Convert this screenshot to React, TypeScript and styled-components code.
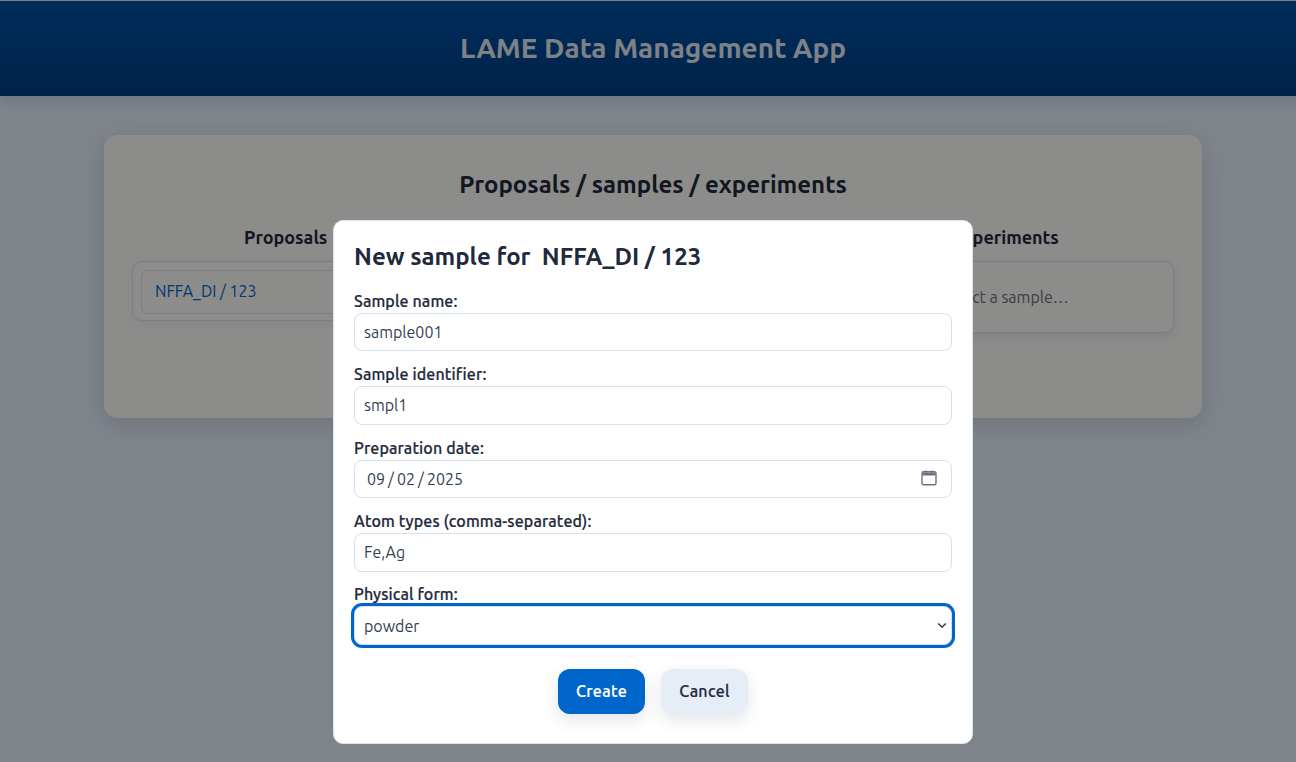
import React from "react";
import styled, { createGlobalStyle } from "styled-components";

const Global = createGlobalStyle`
  html, body { margin: 0; padding: 0; overflow: hidden; height: 100%; }
  body {
    font-family: "Ubuntu", "Noto Sans", "Open Sans", sans-serif;
    background: #e8f0fd;
    color: #1f2a3d;
  }
  * { box-sizing: border-box; }
`;

const Page = styled.div`
  width: 1306px;
  height: 762px;
  position: relative;
  padding-top: 1px;
`;

const Header = styled.header`
  height: 95px;
  display: flex;
  align-items: center;
  justify-content: center;
  background: linear-gradient(180deg, #0052a8 0%, #003f85 100%);
  box-shadow: 0 4px 16px rgba(0, 30, 70, 0.14);
`;

const AppTitle = styled.h1`
  margin: -2px 0 0;
  font-size: 28px;
  font-weight: 700;
  line-height: 34px;
  color: #ffffff;
  opacity: 0.9;
`;

const Card = styled.section`
  width: 1098px;
  height: 283px;
  margin: 39px auto 0;
  padding: 33px 28px;
  background: #fffffc;
  border-radius: 14px;
  box-shadow: 0 6px 24px rgba(0, 30, 70, 0.14);
`;

const CardTitle = styled.h2`
  margin: 0 0 23px;
  text-align: center;
  font-size: 24px;
  line-height: 34px;
  font-weight: 700;
`;

const Columns = styled.div`
  display: grid;
  grid-template-columns: repeat(3, 1fr);
  gap: 24px;
`;

const Column = styled.div`
  display: flex;
  flex-direction: column;
  min-width: 0;
`;

const ColumnTitle = styled.h3<{ $inset?: number }>`
  margin: 0 0 12px;
  padding-right: ${(p) => p.$inset ?? 0}px;
  min-height: 24px;
  text-align: center;
  font-size: 18px;
  line-height: 24px;
  font-weight: 700;
`;

const ListBox = styled.div`
  height: 60px;
  border: 1px solid #dde5ee;
  border-radius: 10px;
  padding: 8px;
  box-shadow: 0 2px 8px rgba(0, 40, 90, 0.06);
`;

const ListItem = styled.div`
  height: 44px;
  display: flex;
  align-items: center;
  padding: 0 13px 2px;
  border: 1px solid #dde5ee;
  border-radius: 6px;
  color: #0066cc;
  font-size: 16px;
`;

const Placeholder = styled.div`
  height: 72px;
  border: 1px solid #dde5ee;
  border-radius: 10px;
  display: flex;
  align-items: center;
  justify-content: center;
  padding: 0 6px 0 0;
  font-size: 16px;
  color: #6a7280;
  box-shadow: 0 4px 12px rgba(0, 40, 90, 0.1);
`;

const Overlay = styled.div`
  position: absolute;
  inset: 0;
  background: rgba(0, 0, 0, 0.45);
  display: flex;
  justify-content: center;
  align-items: flex-start;
  padding-top: 220px;
`;

const Modal = styled.form`
  width: 640px;
  height: 524px;
  background: #ffffff;
  border: 1px solid #dbe6f3;
  border-radius: 10px;
  padding: 20px;
  display: flex;
  flex-direction: column;
`;

const ModalTitle = styled.h2`
  margin: 0 0 17.85px;
  font-size: 24px;
  line-height: 32px;
  font-weight: 700;
  white-space: pre;
`;

const Field = styled.div`
  display: flex;
  flex-direction: column;
  margin-bottom: 12.9px;
`;

const Label = styled.label`
  font-size: 16px;
  font-weight: 500;
  line-height: 20px;
  letter-spacing: 0.12px;
  -webkit-text-stroke: 0.22px currentColor;
  margin-bottom: 2px;
`;

const Control = styled.div`
  position: relative;
`;

const Input = styled.input<{ $lift?: boolean }>`
  display: block;
  height: 38.5px;
  width: 100%;
  border: 1px solid #d4e1f0;
  border-radius: 8px;
  padding: 0 9px ${(p) => (p.$lift ? "1px" : "0")};
  font: inherit;
  font-size: 16px;
  color: #343f52;
  background: #ffffff;
  outline: none;

  &::-webkit-datetime-edit {
    padding: 0 0 0 2px;
  }
  &::-webkit-datetime-edit-text {
    padding: 0 2px;
  }
  &::-webkit-calendar-picker-indicator {
    opacity: 0;
  }
`;

const Select = styled.select<{ $focused?: boolean }>`
  display: block;
  appearance: none;
  height: 38.5px;
  width: 100%;
  border: 1px solid #d4e1f0;
  border-radius: 8px;
  padding: 0 9px;
  font: inherit;
  font-size: 16px;
  color: #343f52;
  background: #ffffff;
  outline: none;
  box-shadow: ${(p) => (p.$focused ? "0 0 0 3px #0066cc" : "none")};
`;

const CalendarIcon = styled.svg`
  position: absolute;
  right: 15px;
  top: 10px;
  width: 16px;
  height: 16px;
  pointer-events: none;
  color: #6b7280;
`;

const ChevronIcon = styled.svg`
  position: absolute;
  right: 5px;
  top: 16px;
  width: 10px;
  height: 7px;
  pointer-events: none;
  color: #343f52;
`;

const Actions = styled.div`
  display: flex;
  justify-content: center;
  gap: 16px;
  margin-top: 11.1px;
`;

const Button = styled.button<{ $primary?: boolean }>`
  width: 87px;
  height: 45px;
  padding: 0;
  border: none;
  border-radius: 12px;
  font-family: inherit;
  font-size: 16px;
  font-weight: 500;
  letter-spacing: 0.3px;
  -webkit-text-stroke: 0.22px currentColor;
  background: ${(p) => (p.$primary ? "#0066cc" : "#e6edf7")};
  color: ${(p) => (p.$primary ? "#ffffff" : "#1f2a3d")};
  box-shadow: 0 6px 16px rgba(0, 40, 90, 0.12);
`;

export default function App() {
  return (
    <>
      <Global />
      <Page>
        <Header>
          <AppTitle>LAME Data Management App</AppTitle>
        </Header>
        <Card>
          <CardTitle>Proposals / samples / experiments</CardTitle>
          <Columns>
            <Column>
              <ColumnTitle $inset={24}>Proposals</ColumnTitle>
              <ListBox>
                <ListItem>NFFA_DI / 123</ListItem>
              </ListBox>
            </Column>
            <Column>
              <ColumnTitle />
              <Placeholder />
            </Column>
            <Column>
              <ColumnTitle $inset={6}>Experiments</ColumnTitle>
              <Placeholder>Select a sample…</Placeholder>
            </Column>
          </Columns>
        </Card>
        <Overlay>
          <Modal>
            <ModalTitle>New sample for  NFFA_DI / 123</ModalTitle>
            <Field>
              <Label>Sample name:</Label>
              <Input $lift readOnly value="sample001" />
            </Field>
            <Field>
              <Label>Sample identifier:</Label>
              <Input readOnly value="smpl1" />
            </Field>
            <Field>
              <Label>Preparation date:</Label>
              <Control>
                <Input readOnly type="date" value="2025-09-02" />
                <CalendarIcon viewBox="0 0 16 16" fill="none" aria-hidden="true">
                  <path d="M4 0.5h1.6v2H4zM10.4 0.5H12v2h-1.6z" fill="currentColor" />
                  <path
                    d="M2.5 1.8h11a1.5 1.5 0 0 1 1.5 1.5v10a1.5 1.5 0 0 1-1.5 1.5h-11A1.5 1.5 0 0 1 1 13.3v-10a1.5 1.5 0 0 1 1.5-1.5Z"
                    stroke="currentColor"
                    strokeWidth="1.4"
                  />
                  <path d="M1.5 2.5h13v3h-13z" fill="currentColor" />
                </CalendarIcon>
              </Control>
            </Field>
            <Field>
              <Label>Atom types (comma-separated):</Label>
              <Input readOnly value="Fe,Ag" />
            </Field>
            <Field>
              <Label>Physical form:</Label>
              <Control>
                <Select $focused value="powder" onChange={() => {}}>
                  <option value="powder">powder</option>
                </Select>
                <ChevronIcon viewBox="0 0 10 7" fill="none" aria-hidden="true">
                  <path d="M1.2 1.5 5 5.2l3.8-3.7" stroke="currentColor" strokeWidth="1.6" />
                </ChevronIcon>
              </Control>
            </Field>
            <Actions>
              <Button type="button" $primary>Create</Button>
              <Button type="button">Cancel</Button>
            </Actions>
          </Modal>
        </Overlay>
      </Page>
    </>
  );
}
